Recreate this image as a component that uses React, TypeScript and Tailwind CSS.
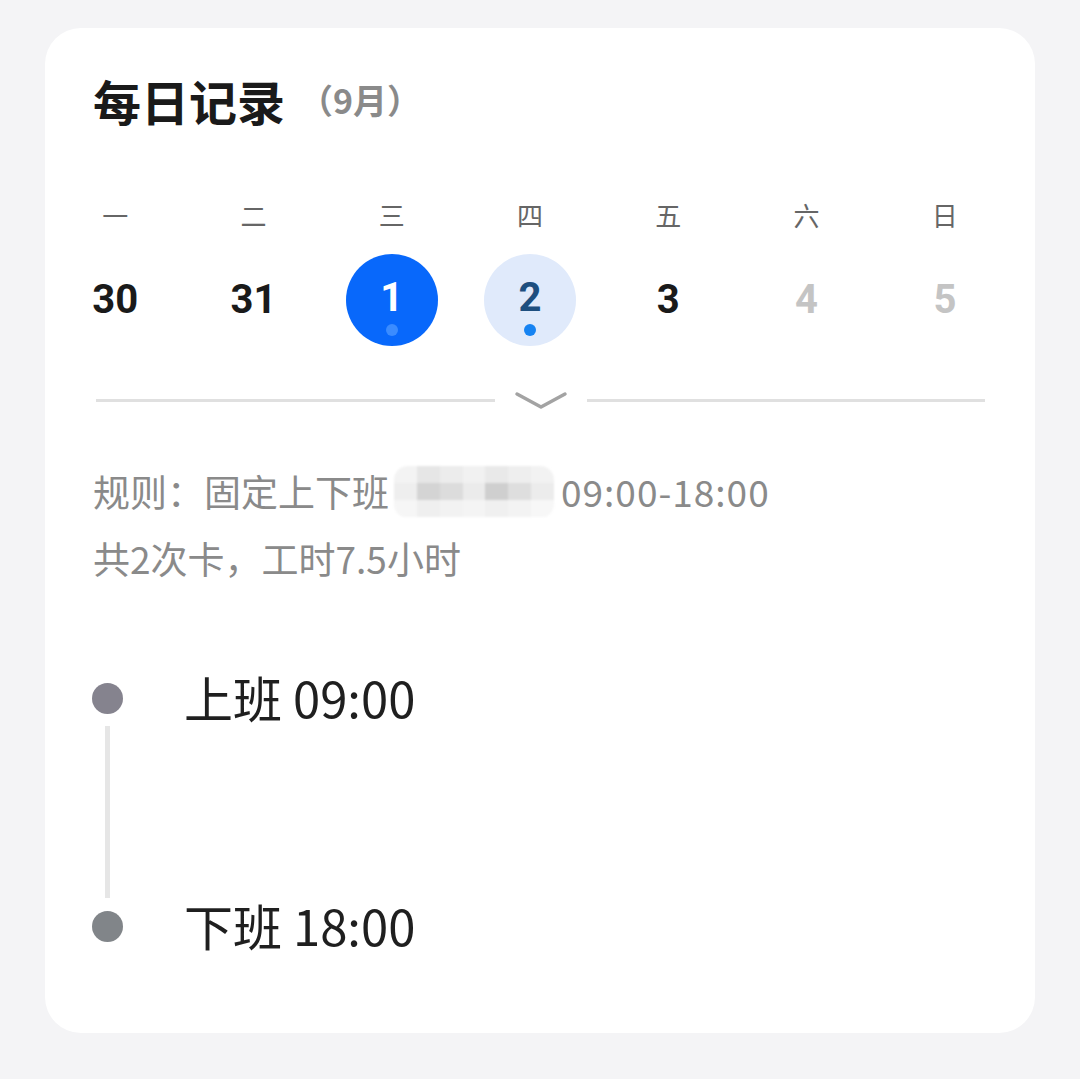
import React from "react";

const cjk = { fontFamily: '"Noto Sans CJK SC", "Noto Sans", sans-serif' };
const num = { fontFamily: 'Roboto, "Noto Sans CJK SC", sans-serif' };

const weekdays = ["一", "二", "三", "四", "五", "六", "日"];

function Mosaic() {
  const cells = [
    ["#f3f3f3", "#e6e6e6", "#ececec", "#f1f1f1", "#e9e9e9", "#eeeeee", "#f2f2f2"],
    ["#eeeeee", "#d4d4d4", "#dcdcdc", "#ebebeb", "#cfcfcf", "#dedede", "#ececec"],
    ["#f6f6f6", "#efefef", "#f2f2f2", "#f4f4f4", "#f0f0f0", "#f3f3f3", "#f7f7f7"],
  ];
  return (
    <div className="ml-[5px] mr-[7px] flex h-[52px] w-[160px] flex-col overflow-hidden rounded-[14px] blur-[1px]">
      {cells.map((row, i) => (
        <div key={i} className="flex flex-1">
          {row.map((c, j) => (
            <div key={j} className="flex-1" style={{ backgroundColor: c }} />
          ))}
        </div>
      ))}
    </div>
  );
}

export default function App() {
  return (
    <div className="h-[1079px] w-[1080px] bg-[#f4f4f6] px-[45px] pt-[28px]" style={cjk}>
      <div className="h-[1005px] w-[990px] rounded-[36px] bg-white pt-[44px]">
        {/* Title */}
        <div className="flex h-[56px] items-center pl-[48px]">
          <span className="text-[48px] font-bold leading-none text-[#1a1a1a]">每日记录</span>
          <span className="ml-[14px] text-[34px] font-bold leading-none text-[#8a8a8a]">（9月）</span>
        </div>

        {/* Weekdays */}
        <div className="ml-[1px] mt-[67px] grid h-[40px] w-[968px] grid-cols-7 items-center">
          {weekdays.map((w) => (
            <div key={w} className="text-center text-[26px] leading-none text-[#666666]">
              {w}
            </div>
          ))}
        </div>

        {/* Dates */}
        <div className="ml-[1px] mt-[19px] grid h-[92px] w-[968px] grid-cols-7 items-center" style={num}>
          <div className="text-center text-[40px] font-bold text-[#1a1a1a]">30</div>
          <div className="text-center text-[40px] font-bold text-[#1a1a1a]">31</div>
          <div className="flex justify-center">
            <div className="relative flex h-[92px] w-[92px] items-center justify-center rounded-full bg-[#0868fb] text-[40px] font-bold text-white">
              <span className="-mt-[4px]">1</span>
              <span className="absolute left-[40px] top-[70px] h-[12px] w-[12px] rounded-full bg-[#3b8cff]" />
            </div>
          </div>
          <div className="flex justify-center">
            <div className="relative flex h-[92px] w-[92px] items-center justify-center rounded-full bg-[#e0eafb] text-[40px] font-bold text-[#1e4f7f]">
              <span className="-mt-[4px]">2</span>
              <span className="absolute left-[40px] top-[70px] h-[12px] w-[12px] rounded-full bg-[#1683f2]" />
            </div>
          </div>
          <div className="text-center text-[40px] font-bold text-[#1a1a1a]">3</div>
          <div className="text-center text-[40px] font-bold text-[#c4c4c4]">4</div>
          <div className="text-center text-[40px] font-bold text-[#c4c4c4]">5</div>
        </div>

        {/* Divider with chevron */}
        <div className="ml-[51px] mt-[42px] flex h-[24px] w-[889px] items-center gap-[18px]">
          <div className="h-[3px] flex-1 bg-[#e0e0e0]" />
          <svg width="56" height="22" viewBox="0 0 56 22" fill="none">
            <path d="M4 5 L28 18 L52 5" stroke="#a3a3a3" strokeWidth="3.5" strokeLinecap="round" strokeLinejoin="round" />
          </svg>
          <div className="h-[3px] flex-1 bg-[#e0e0e0]" />
        </div>

        {/* Rules */}
        <div className="ml-[48px] mt-[46px] text-[37px] text-[#8a8a8a]">
          <div className="flex h-[67px] items-center">
            <span>规则：固定上下班</span>
            <Mosaic />
            <span className="tracking-[1px]">09:00-18:00</span>
          </div>
          <div className="flex h-[67px] items-center">共2次卡，工时7.5小时</div>
        </div>

        {/* Timeline */}
        <div className="ml-[47px] mt-[78px]">
          <div className="flex h-[56px] items-center">
            <div className="h-[31px] w-[31px] rounded-full bg-[#85838e]" />
            <div className="ml-[61px] -mt-[4px] text-[49px] leading-none text-[#1f1f1f]">上班 09:00</div>
          </div>
          <div className="ml-[13px] h-[172px] w-[5px] bg-[#e6e6e6]" />
          <div className="flex h-[56px] items-center">
            <div className="h-[31px] w-[31px] rounded-full bg-[#818589]" />
            <div className="ml-[61px] -mt-[4px] text-[49px] leading-none text-[#1f1f1f]">下班 18:00</div>
          </div>
        </div>
      </div>
    </div>
  );
}
